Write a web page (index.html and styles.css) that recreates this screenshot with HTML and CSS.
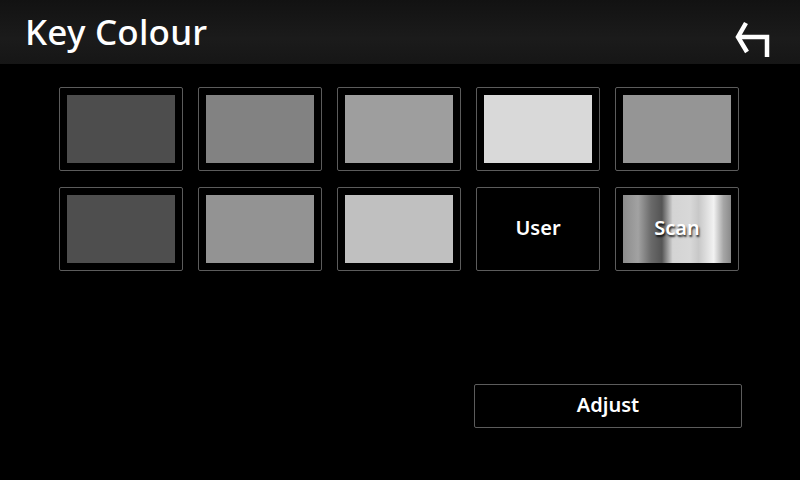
FILE: index.html
```html
<!DOCTYPE html>
<html lang="en">
<head>
    <meta charset="UTF-8">
    <meta name="viewport" content="width=device-width, initial-scale=1.0">
    <title>Key Colour</title>
    <link rel="stylesheet" href="styles.css">
</head>
<body>

<header class="topbar">
    <h1 class="title">Key Colour</h1>
    <button class="back" aria-label="Back">
        <svg width="40" height="40" viewBox="0 0 40 40">
            <path d="M14 4 L6 18 L15 33" fill="none" stroke="#fff" stroke-width="4.5"/>
            <path d="M6.5 18 H35 V38" fill="none" stroke="#fff" stroke-width="4.5"/>
        </svg>
    </button>
</header>

<main class="content">
    <div class="swatches">
        <div class="tile"><div class="fill" style="background:#4d4d4d"></div></div>
        <div class="tile"><div class="fill" style="background:#828282"></div></div>
        <div class="tile"><div class="fill" style="background:#9e9e9e"></div></div>
        <div class="tile"><div class="fill" style="background:#d9d9d9"></div></div>
        <div class="tile"><div class="fill" style="background:#959595"></div></div>
        <div class="tile"><div class="fill" style="background:#4e4e4e"></div></div>
        <div class="tile"><div class="fill" style="background:#939393"></div></div>
        <div class="tile"><div class="fill" style="background:#c0c0c0"></div></div>
        <div class="tile"><div class="fill label">User</div></div>
        <div class="tile"><div class="fill label scan">Scan</div></div>
    </div>

    <div class="actions">
        <button class="adjust">Adjust</button>
    </div>
</main>

</body>
</html>
```

FILE: styles.css
```css
body {
    margin: 0;
    width: 800px;
    height: 480px;
    background-color: #000;
    color: #fff;
    font-family: "Noto Sans", "Open Sans", sans-serif;
    overflow: hidden;
}

.topbar {
    height: 64px;
    display: flex;
    align-items: center;
    justify-content: space-between;
    padding: 0 25px 0 25px;
    background: linear-gradient(#121212, #1b1b1b 60%, #161616);
}

.title {
    margin: 0;
    font-size: 35px;
    font-weight: 500;
    letter-spacing: 0.2px;
    padding-bottom: 2px;
}

.back {
    width: 40px;
    height: 40px;
    padding: 0;
    margin-top: 14px;
    margin-right: 3px;
    border: none;
    background: none;
}

.back svg {
    display: block;
}

.content {
    padding: 23px 0 0 59px;
}

.swatches {
    display: grid;
    grid-template-columns: repeat(5, 124px);
    grid-auto-rows: 84px;
    column-gap: 15px;
    row-gap: 16px;
}

.tile {
    border: 1px solid #5c5c5c;
    border-radius: 2px;
    padding: 7px;
}

.fill {
    height: 100%;
}

.label {
    display: flex;
    align-items: center;
    justify-content: center;
    box-sizing: border-box;
    padding-bottom: 4px;
    font-size: 20px;
    font-weight: 600;
}

.scan {
    background: linear-gradient(90deg,
        #8c8c8c 0%, #a2a2a2 14%, #6a6a6a 26%, #545454 36%,
        #d4d4d4 46%, #d8d8d8 62%, #c8c8c8 70%, #f2f2f2 84%,
        #a6a6a6 93%, #8a8a8a 100%);
    text-shadow: 1px 2px 2px rgba(0, 0, 0, 0.8);
}

.actions {
    display: flex;
    justify-content: flex-end;
    margin-top: 113px;
    padding-right: 58px;
}

.adjust {
    width: 268px;
    height: 44px;
    padding: 0 0 4px 0;
    border: 1px solid #5c5c5c;
    border-radius: 2px;
    background: #000;
    color: #fff;
    font-family: "Noto Sans", "Open Sans", sans-serif;
    font-size: 20px;
    font-weight: 600;
}
```
